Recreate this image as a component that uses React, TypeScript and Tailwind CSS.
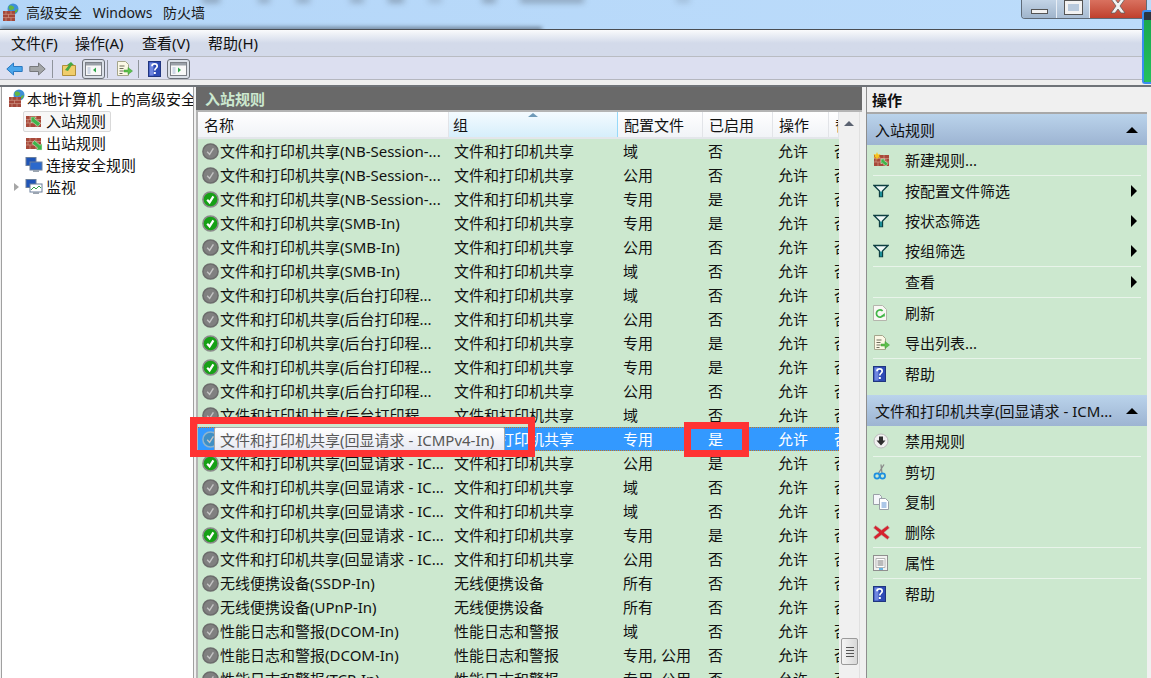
import React from 'react';

const FONT = "[font-family:'Noto_Sans','Noto_Sans_CJK_SC',sans-serif]";

type Row = { name: string; group: string; profile: string; enabled: string; on: boolean; selected?: boolean };

const PRINT = '文件和打印机共享';
const ECHO = '文件和打印机共享(回显请求 - IC...';
const SPOOL = '文件和打印机共享(后台打印程...';
const NB = '文件和打印机共享(NB-Session-...';
const SMB = '文件和打印机共享(SMB-In)';
const PERF = '性能日志和警报';

const ROWS: Row[] = [
    { name: NB, group: PRINT, profile: '域', enabled: '否', on: false },
    { name: NB, group: PRINT, profile: '公用', enabled: '否', on: false },
    { name: NB, group: PRINT, profile: '专用', enabled: '是', on: true },
    { name: SMB, group: PRINT, profile: '专用', enabled: '是', on: true },
    { name: SMB, group: PRINT, profile: '公用', enabled: '否', on: false },
    { name: SMB, group: PRINT, profile: '域', enabled: '否', on: false },
    { name: SPOOL, group: PRINT, profile: '域', enabled: '否', on: false },
    { name: SPOOL, group: PRINT, profile: '公用', enabled: '否', on: false },
    { name: SPOOL, group: PRINT, profile: '专用', enabled: '是', on: true },
    { name: SPOOL, group: PRINT, profile: '专用', enabled: '是', on: true },
    { name: SPOOL, group: PRINT, profile: '公用', enabled: '否', on: false },
    { name: SPOOL, group: PRINT, profile: '域', enabled: '否', on: false },
    { name: ECHO, group: PRINT, profile: '专用', enabled: '是', on: true, selected: true },
    { name: ECHO, group: PRINT, profile: '公用', enabled: '是', on: true },
    { name: ECHO, group: PRINT, profile: '域', enabled: '否', on: false },
    { name: ECHO, group: PRINT, profile: '域', enabled: '否', on: false },
    { name: ECHO, group: PRINT, profile: '专用', enabled: '是', on: true },
    { name: ECHO, group: PRINT, profile: '公用', enabled: '否', on: false },
    { name: '无线便携设备(SSDP-In)', group: '无线便携设备', profile: '所有', enabled: '否', on: false },
    { name: '无线便携设备(UPnP-In)', group: '无线便携设备', profile: '所有', enabled: '否', on: false },
    { name: PERF + '(DCOM-In)', group: PERF, profile: '域', enabled: '否', on: false },
    { name: PERF + '(DCOM-In)', group: PERF, profile: '专用, 公用', enabled: '否', on: false },
    { name: PERF + '(TCP-In)', group: PERF, profile: '专用, 公用', enabled: '否', on: false },
];

const StatusIcon = ({ on, selected }: { on: boolean; selected?: boolean }) => {
    const fill = selected ? '#3f8fc4' : on ? '#16a016' : '#808080';
    const ring = selected ? '#8fb4cc' : on ? '#8a8a8a' : '#6c6c6c';
    const tick = on && !selected ? '#ffffff' : '#c4c4c4';
    return (
        <svg width="17" height="17" viewBox="0 0 17 17" className="shrink-0">
            <circle cx="8.5" cy="8.5" r="7.6" fill={fill} stroke={ring} strokeWidth="1.5" />
            <path d="M5.2 8.8 L7.6 11.4 L11.4 5.4" fill="none" stroke={tick} strokeWidth={on && !selected ? 2.2 : 1.4} />
        </svg>
    );
};

const Bricks = ({ arrow }: { arrow?: 'in' | 'out' | 'new' }) => (
    <svg width="18" height="16" viewBox="0 0 18 16" className="shrink-0">
        <rect x="1" y="3" width="15" height="11" fill="#a8493a" />
        <path d="M1 6.5h15M1 10h15M5 3v3.5M11 3v3.5M8 6.5V10M3 6.5V10M13 6.5V10M5 10v4M11 10v4" stroke="#cf9a88" strokeWidth="0.7" />
        {arrow === 'in' && <path d="M6 4h5l-1.5 1.8 6 4.4-2.5 3.3-5.8-4.6L6.2 10z" fill="#3fb54a" stroke="#e4f5e2" strokeWidth="0.5" />}
        {arrow === 'out' && <path d="M17 15h-6l1.7-2L7 8.5 9.5 5.500l5.600 4.800L17 8.500z" fill="#3fb54a" stroke="#e4f5e2" strokeWidth="0.5" />}
        {arrow === 'new' && <path d="M8 7h4l-1 1.300 4 3.200-2 2.500-4-3.200-1 1.200z" fill="#3fb54a" stroke="#e4f5e2" strokeWidth="0.5" />}
        {arrow === 'new' && <polygon points="4,0 5,2.500 7.500,2 6,4 7.500,6 5,5.500 4,8 3,5.500 .5,6 2,4 .5,2 3,2.500" fill="#f7c51e" />}
    </svg>
);

const Globe = () => (
    <svg width="18" height="20" viewBox="0 0 18 20" className="shrink-0">
        <circle cx="11" cy="6" r="5.5" fill="#3d8fd8" />
        <path d="M7 3c2-1 4 0 5 1s-1 3-3 3-3-2-2-4zM13 7l3-1-1 3-2 1z" fill="#62b545" />
        <rect x="1" y="8" width="12" height="10" fill="#a4473a" />
        <path d="M1 11.3h12M1 14.6h12M4 8v3.3M9 8v3.3M6.5 11.3v3.3M4 14.6V18M9 14.6V18" stroke="#cf9a88" strokeWidth="0.7" />
    </svg>
);

const Monitors = ({ chart }: { chart?: boolean }) => (
    <svg width="18" height="16" viewBox="0 0 18 16" className="shrink-0">
        <rect x="1" y="0.5" width="10" height="8" fill="#1f55b8" stroke="#6a7f9c" />
        <rect x="5" y="5" width="12" height="8" fill={chart ? '#ffffff' : '#2c69cc'} stroke="#6a7f9c" />
        {chart && <path d="M6 11l3-3 2 2 3-3 2 2" fill="none" stroke="#35a04a" />}
        <rect x="8" y="13" width="6" height="2" fill="#9aa4b0" />
    </svg>
);

const Funnel = () => (
    <svg width="16" height="14" viewBox="0 0 16 14" className="shrink-0">
        <path d="M1 1.5h14L9.5 7v5.5h-3V7z" fill="#eef8f6" stroke="#0d3f42" strokeWidth="1.3" />
        <path d="M7 7.5h2v5H7z" fill="#1c8f96" />
    </svg>
);

const HelpIcon = ({ size = 13 }: { size?: number }) => (
    <svg width={size} height={size + 3} viewBox="0 0 13 16" className="shrink-0">
        <rect x="0.5" y="0.5" width="12" height="15" fill="#2e4bb5" stroke="#20357f" />
        <rect x="1.5" y="1.5" width="4" height="13" fill="#6f86e0" />
        <path d="M4 5.2c0-3 5.2-3 5.2 0 0 2-2.4 2-2.4 4.2" fill="none" stroke="#ffffff" strokeWidth="1.7" />
        <rect x="5.8" y="11" width="2" height="2" fill="#ffffff" />
    </svg>
);

const ExportIcon = () => (
    <svg width="17" height="16" viewBox="0 0 17 16" className="shrink-0">
        <path d="M1.5.5h8l3 3v11h-11z" fill="#fbf8e6" stroke="#a5a58c" />
        <path d="M3.5 5h5M3.5 7.5h4M3.5 10h4M3.5 12.5h3" stroke="#6d6d5c" />
        <path d="M8 9h4V6.5l4.500 3.500-4.500 3.500V11H8z" fill="#5dc04c" stroke="#3a9a30" strokeWidth="0.5" />
    </svg>
);

const RefreshIcon = () => (
    <svg width="14" height="16" viewBox="0 0 14 16" className="shrink-0">
        <path d="M.5.5h9l4 4v11H.5z" fill="#f8f8f4" stroke="#b5b5ad" />
        <path d="M10 10.5A3.6 3.6 0 1 1 9.6 6" fill="none" stroke="#43b649" strokeWidth="1.7" />
        <path d="M7.5 11.5h4.3V8z" fill="#43b649" />
    </svg>
);

const PaneToggle = ({ side }: { side: 'left' | 'right' }) => (
    <div className="w-[23px] h-[20px] rounded-[3px] border border-[#6b7078] bg-[#dbe0e8] flex items-center justify-center shrink-0">
        <svg width="17" height="14" viewBox="0 0 17 14">
            <rect x="0.5" y="0.5" width="16" height="13" fill="#f8f8f8" stroke="#7c8087" />
            <rect x="1" y="1" width="15" height="2.5" fill="#9aa0a8" />
            <path d="M2.5 5h3v7h-3z" fill="#cfd8e6" />
            {side === 'left' ? <path d="M11 5.5v5L8 8z" fill="#2fa84a" /> : <path d="M8 5.5v5L11 8z" fill="#2fa84a" />}
        </svg>
    </div>
);

const ToolSep = () => <div className="w-px h-[18px] bg-[#8f949c] shrink-0" />;

const ArrowBtn = ({ dir, color, stroke }: { dir: 'l' | 'r'; color: string; stroke: string }) => (
    <svg width="17" height="14" viewBox="0 0 17 14" className="shrink-0">
        <path
            d={dir === 'l' ? 'M.8 7L7.5 1v3.5h8.7v5H7.5V13z' : 'M16.2 7L9.5 1v3.5H.8v5h8.7V13z'}
            fill={color}
            stroke={stroke}
        />
    </svg>
);

const TreeItem = ({ icon, label, active, caret }: { icon: React.ReactNode; label: string; active?: boolean; caret?: boolean }) => (
    <div className="h-[22px] flex items-center relative pl-[21px]">
        {caret && <span className="absolute left-[12px] top-[7px] w-0 h-0 border-y-[4px] border-y-transparent border-l-[5px] border-l-[#a6a6a6]" />}
        <div className={`flex items-center gap-[3px] h-[21px] pr-[4px] pl-px rounded-[2px] border ${active ? 'border-[#d9d9d9] bg-[#f7f7f7]' : 'border-transparent'}`}>
            {icon}
            <span>{label}</span>
        </div>
    </div>
);

const COLS = ['w-[251px]', 'w-[169px]', 'w-[85px]', 'w-[70px]', 'w-[56px]', 'w-[10px]'];

const TableRow = ({ row }: { row: Row }) => (
    <div
        className={`flex h-[24px] shrink-0 items-center whitespace-nowrap ${
            row.selected ? 'bg-[#3399ff] text-white border-y border-dotted border-[#c9761c]' : 'text-[#111]'
        }`}
    >
        <div className={`${COLS[0]} shrink-0 flex items-center pl-[4px] overflow-hidden`}>
            <StatusIcon on={row.on} selected={row.selected} />
            <span className="ml-px">{row.name}</span>
        </div>
        <div className={`${COLS[1]} shrink-0 pl-[5px]`}>{row.group}</div>
        <div className={`${COLS[2]} shrink-0 pl-[5px]`}>{row.profile}</div>
        <div className={`${COLS[3]} shrink-0 pl-[5px]`}>{row.enabled}</div>
        <div className={`${COLS[4]} shrink-0 pl-[5px]`}>允许</div>
        <div className={`${COLS[5]} shrink-0 pl-[5px] overflow-hidden`}>否</div>
    </div>
);

const HeaderCell = ({ label, width, sorted }: { label: string; width: string; sorted?: boolean }) => (
    <div
        className={`${width} shrink-0 relative flex items-center overflow-hidden whitespace-nowrap border-r ${
            sorted
                ? 'pl-[4px] bg-linear-to-b from-[#f4fbff] to-[#d6eefb] border-[#96d9f9]'
                : 'pl-[6px] bg-linear-to-b from-white to-[#f1f3f7] border-[#e2e4e8]'
        }`}
    >
        {sorted && <span className="absolute left-[79px] top-[1px] w-0 h-0 border-x-[5px] border-x-transparent border-b-[4px] border-b-[#6f9ab8]" />}
        {label}
    </div>
);

const ActionItem = ({ icon, label, more }: { icon?: React.ReactNode; label: string; more?: boolean }) => (
    <div className="h-[30px] flex items-center relative">
        <div className="w-[38px] shrink-0 pl-[6px] flex items-center">{icon}</div>
        <span>{label}</span>
        {more && <span className="absolute right-[10px] top-[9px] w-0 h-0 border-y-[6px] border-y-transparent border-l-[6px] border-l-black" />}
    </div>
);

const ActionSep = () => <div className="h-px ml-[6px] mr-[6px] bg-[#e8f4ea]" />;

const SectionHeader = ({ label }: { label: string }) => (
    <div className="h-[31px] flex items-center justify-between pl-[8px] pr-[9px] bg-linear-to-b from-[#bad3eb] to-[#9db4d2] text-[#111] whitespace-nowrap">
        <span>{label}</span>
        <span className="w-0 h-0 border-x-[6px] border-x-transparent border-b-[6px] border-b-black" />
    </div>
);

const App: React.FC = () => {
    return (
        <div className={`w-[1151px] h-[678px] overflow-hidden relative flex flex-col bg-[#f0f0f0] text-[15px] leading-[20px] text-[#111] ${FONT}`}>
            {/* Title bar, with the blurred desktop showing through */}
            <div className="h-[29px] shrink-0 flex items-center pl-[2px] gap-[6px] bg-linear-to-r from-[#b4d6f8] to-[#bcdcfb] relative overflow-hidden">
                <div className="absolute left-[202px] top-[-4px] w-[18px] h-[7px] bg-[#6f7f90] blur-[3px] opacity-60" />
                <div className="absolute left-[258px] top-[-4px] w-[12px] h-[7px] bg-[#6f7f90] blur-[3px] opacity-50" />
                <div className="absolute left-[296px] top-[-4px] w-[14px] h-[7px] bg-[#6f7f90] blur-[3px] opacity-50" />
                <div className="absolute left-[350px] top-[-4px] w-[14px] h-[7px] bg-[#6f7f90] blur-[3px] opacity-50" />
                <div className="absolute left-[388px] top-[-4px] w-[16px] h-[7px] bg-[#6f7f90] blur-[3px] opacity-60" />
                <div className="absolute left-[428px] top-[-4px] w-[14px] h-[7px] bg-[#6f7f90] blur-[3px] opacity-30" />
                <div className="absolute left-[482px] top-[-4px] w-[14px] h-[7px] bg-[#6f7f90] blur-[3px] opacity-60" />
                <div className="absolute left-[520px] top-[-4px] w-[64px] h-[7px] bg-[#6f7f90] blur-[3px] opacity-60" />
                <div className="absolute left-[676px] top-[-4px] w-[14px] h-[7px] bg-[#6f7f90] blur-[3px] opacity-30" />
                <div className="absolute left-0 bottom-[-3px] w-[542px] h-[5px] bg-[#4e5c6b] blur-[2px] opacity-70" />
                <div className="relative -mt-[3px]"><Globe /></div>
                <span className="relative -mt-[3px] text-[14px] [word-spacing:7px] text-[#1b1b1b]">高级安全 Windows 防火墙</span>
            </div>

            {/* Menu */}
            <div className="h-[28px] shrink-0 flex items-center border-t border-[#4a4d52] border-b border-b-[#b9bcc2] bg-linear-to-b from-[#fafbfc] via-[#d3daea] to-[#d3daea] pl-[11px]">
                <span className="w-[64px]">文件(F)</span>
                <span className="w-[67px]">操作(A)</span>
                <span className="w-[66px]">查看(V)</span>
                <span>帮助(H)</span>
            </div>

            {/* Toolbar */}
            <div className="h-[23px] shrink-0 flex items-center pl-[6px] pt-[2px] bg-[#dcdff0] border-b border-[#b5b7bf]">
                <ArrowBtn dir="l" color="#4aa6ec" stroke="#2a78c0" />
                <div className="w-[6px] shrink-0" />
                <ArrowBtn dir="r" color="#a4a6a8" stroke="#77797c" />
                <div className="w-[6px] shrink-0" />
                <ToolSep />
                <div className="w-[9px] shrink-0" />
                <svg width="15" height="14" viewBox="0 0 15 14" className="shrink-0">
                    <path d="M.5 3.5h13v10H.5z" fill="#f0cd6b" stroke="#b08f3a" />
                    <path d="M3 8l4-5H5l4-3 3 3h-2L6 9z" fill="#47a843" />
                </svg>
                <div className="w-[5px] shrink-0" />
                <PaneToggle side="left" />
                <div className="w-[2px] shrink-0" />
                <ToolSep />
                <div className="w-[8px] shrink-0" />
                <ExportIcon />
                <div className="w-[5px] shrink-0" />
                <ToolSep />
                <div className="w-[9px] shrink-0" />
                <HelpIcon />
                <div className="w-[6px] shrink-0" />
                <PaneToggle side="right" />
            </div>

            {/* Spacer under the toolbar */}
            <div className="h-[7px] shrink-0 bg-[#eeeeee] border-b-2 border-[#6f7378]" />

            {/* Panes */}
            <div className="flex-1 min-h-0 flex items-stretch">
                {/* Tree */}
                <div className="w-[193px] shrink-0 ml-px bg-white border-r border-l border-[#a0a0a0] overflow-hidden whitespace-nowrap">
                    <div className="h-[23px] flex items-center pl-[6px] gap-px">
                        <Globe />
                        <span>本地计算机 上的高级安全</span>
                    </div>
                    <TreeItem icon={<Bricks arrow="in" />} label="入站规则" active />
                    <TreeItem icon={<Bricks arrow="out" />} label="出站规则" />
                    <TreeItem icon={<Monitors />} label="连接安全规则" />
                    <TreeItem icon={<Monitors chart />} label="监视" caret />
                </div>

                {/* Rules list */}
                <div className="w-[666px] shrink-0 ml-[2px] flex flex-col min-h-0 overflow-hidden">
                    <div className="h-[23px] shrink-0 flex items-center pl-[9px] bg-[#696969] text-[#cce8cf] font-bold">
                        入站规则
                    </div>
                    <div className="flex-1 min-h-0 flex border-l-2 border-t-2 border-[#b4b4b4]">
                        <div className="w-[641px] shrink-0 flex flex-col min-h-0 bg-[#cce8cf] overflow-hidden">
                            <div className="h-[27px] shrink-0 flex border-b-2 border-[#e3e6ea] bg-white">
                                <HeaderCell label="名称" width="w-[251px]" />
                                <HeaderCell label="组" width="w-[169px]" sorted />
                                <HeaderCell label="配置文件" width="w-[85px]" />
                                <HeaderCell label="已启用" width="w-[70px]" />
                                <HeaderCell label="操作" width="w-[56px]" />
                                <HeaderCell label="替代" width="w-[10px]" />
                            </div>
                            {ROWS.map((row, i) => (
                                <TableRow key={i} row={row} />
                            ))}
                        </div>
                        {/* Scrollbar */}
                        <div className="w-[21px] shrink-0 bg-[#f0f0f0] relative border-r border-[#e0e0e0]">
                            <span className="absolute left-[5px] top-[9px] w-0 h-0 border-x-[5px] border-x-transparent border-b-[5px] border-b-[#5a6270]" />
                            <div className="absolute left-[2px] top-[526px] w-[17px] h-[27px] rounded-[2px] border border-[#9a9a9a] bg-linear-to-r from-[#f4f4f4] to-[#d8d8d8] flex flex-col items-center justify-center gap-[2px]">
                                <span className="w-[8px] h-px bg-[#555]" />
                                <span className="w-[8px] h-px bg-[#555]" />
                                <span className="w-[8px] h-px bg-[#555]" />
                                <span className="w-[8px] h-px bg-[#555]" />
                            </div>
                        </div>
                    </div>
                </div>

                {/* Actions */}
                <div className="w-[281px] shrink-0 ml-[4px] flex flex-col border-l border-[#8e8e8e] min-h-0 overflow-hidden">
                    <div className="h-[27px] shrink-0 pl-[5px] flex items-center bg-[#f0f0f0] font-bold border-b-2 border-[#a8a8a8]">操作</div>
                    <div className="flex-1 bg-[#cce8cf]">
                        <SectionHeader label="入站规则" />
                        <ActionItem icon={<Bricks arrow="new" />} label="新建规则..." />
                        <ActionSep />
                        <ActionItem icon={<Funnel />} label="按配置文件筛选" more />
                        <ActionItem icon={<Funnel />} label="按状态筛选" more />
                        <ActionItem icon={<Funnel />} label="按组筛选" more />
                        <ActionSep />
                        <ActionItem label="查看" more />
                        <ActionSep />
                        <ActionItem icon={<RefreshIcon />} label="刷新" />
                        <ActionItem icon={<ExportIcon />} label="导出列表..." />
                        <ActionSep />
                        <ActionItem icon={<HelpIcon />} label="帮助" />
                        <div className="h-[6px]" />
                        <SectionHeader label="文件和打印机共享(回显请求 - ICM..." />
                        <ActionItem
                            icon={
                                <svg width="16" height="16" viewBox="0 0 16 16">
                                    <circle cx="8" cy="8" r="7" fill="#f1f1f1" stroke="#bdbdbd" />
                                    <path d="M6 3.5h4v4h2.5L8 12.5 3.5 7.5H6z" fill="#2e2e2e" />
                                </svg>
                            }
                            label="禁用规则"
                        />
                        <ActionSep />
                        <ActionItem
                            icon={
                                <svg width="14" height="16" viewBox="0 0 14 16">
                                    <path d="M11 .5L5 10M8 .5l1 9" stroke="#8a8a8a" strokeWidth="1.3" fill="none" />
                                    <circle cx="4" cy="12" r="2.6" fill="none" stroke="#1c8fe0" strokeWidth="1.7" />
                                    <circle cx="9.5" cy="12" r="2.6" fill="none" stroke="#1c8fe0" strokeWidth="1.7" />
                                </svg>
                            }
                            label="剪切"
                        />
                        <ActionItem
                            icon={
                                <svg width="16" height="16" viewBox="0 0 16 16">
                                    <path d="M.5.5h6l2 2v8h-8z" fill="#f5f7fb" stroke="#9aa0a8" />
                                    <path d="M6.5 4.5h6l3 3v8h-9z" fill="#ffffff" stroke="#9aa0a8" />
                                    <path d="M8.5 9h5M8.5 11h5M8.5 13h5" stroke="#5a8fd0" />
                                </svg>
                            }
                            label="复制"
                        />
                        <ActionItem
                            icon={
                                <svg width="17" height="16" viewBox="0 0 17 16">
                                    <path d="M2.5 1.5l6 4.500 6-4.500 2 2.500-5.500 4.500 5.500 4.500-2 2.500-6-4.500-6 4.500-2-2.500 5.500-4.500L.5 4z" fill="#d6222e" stroke="#b4bcb4" strokeWidth="0.6" />
                                </svg>
                            }
                            label="删除"
                        />
                        <ActionSep />
                        <ActionItem
                            icon={
                                <svg width="15" height="16" viewBox="0 0 15 16">
                                    <rect x="0.5" y="0.5" width="14" height="15" fill="#f2f2f0" stroke="#8f8f8f" />
                                    <path d="M3 3.5h9v9H3z" fill="#ffffff" stroke="#b5b5b5" />
                                    <path d="M4.5 6h6M4.5 8h6M4.5 10h6" stroke="#777" />
                                    <path d="M6 14h4" stroke="#3aa0e0" strokeWidth="1.5" />
                                </svg>
                            }
                            label="属性"
                        />
                        <ActionSep />
                        <ActionItem icon={<HelpIcon />} label="帮助" />
                    </div>
                </div>
            </div>

            {/* Tooltip over the selected row */}
            <div className="absolute left-[214px] top-[427px] w-[291px] h-[25px] rounded-[2px] border border-[#a8a8a8] bg-linear-to-b from-white to-[#e6e8f2] text-[#575757] pl-[5px] flex items-center whitespace-nowrap">
                文件和打印机共享(回显请求 - ICMPv4-In)
            </div>

            {/* Red annotation boxes */}
            <div className="absolute left-[190px] top-[417px] w-[345px] h-[40px] border-[7px] border-[#ff3333]" />
            <div className="absolute left-[684px] top-[422px] w-[65px] h-[35px] border-[7px] border-[#ff3333]" />

            {/* Window buttons */}
            <div className="absolute left-[1021px] top-0 w-[126px] h-[19px] flex border border-t-0 border-[#5f6b78] rounded-b-[4px] overflow-hidden">
                <div className="w-[35px] bg-linear-to-b from-[#c3d4e6] to-[#9fb4cb] border-r border-[#e8eef5] flex justify-center items-end pb-[4px]">
                    <span className="w-[17px] h-[5px] bg-[#f2f2f2] border border-[#555]" />
                </div>
                <div className="w-[33px] bg-linear-to-b from-[#c3d4e6] to-[#a9bdd3] border-r border-[#e8eef5] flex justify-center pt-[1px]">
                    <span className="w-[17px] h-[13px] border-[3px] border-[#f2f2f2] outline outline-1 outline-[#555] bg-[#b8c9dc]" />
                </div>
                <div className="flex-1 bg-linear-to-b from-[#d9715f] to-[#bf3f2c] flex justify-center items-start">
                    <svg width="16" height="14" viewBox="0 0 16 14">
                        <path d="M1-1h4l3 4 3-4h4l-5 7 5 7h-4l-3-4-3 4H1l5-7z" fill="#f2f2f2" stroke="#555" strokeWidth="0.7" />
                    </svg>
                </div>
            </div>

            {/* Level meter at the screen edge */}
            <div className="absolute left-[1142px] top-[10px] w-[9px] h-[74px] rounded-l-[3px] bg-[#2b3540] border-2 border-r-0 border-[#3a8df0] overflow-hidden">
                <div className="mt-[8px] h-full bg-linear-to-b from-[#1aa84f] to-[#27c45e]" />
            </div>
        </div>
    );
};

export default App;
